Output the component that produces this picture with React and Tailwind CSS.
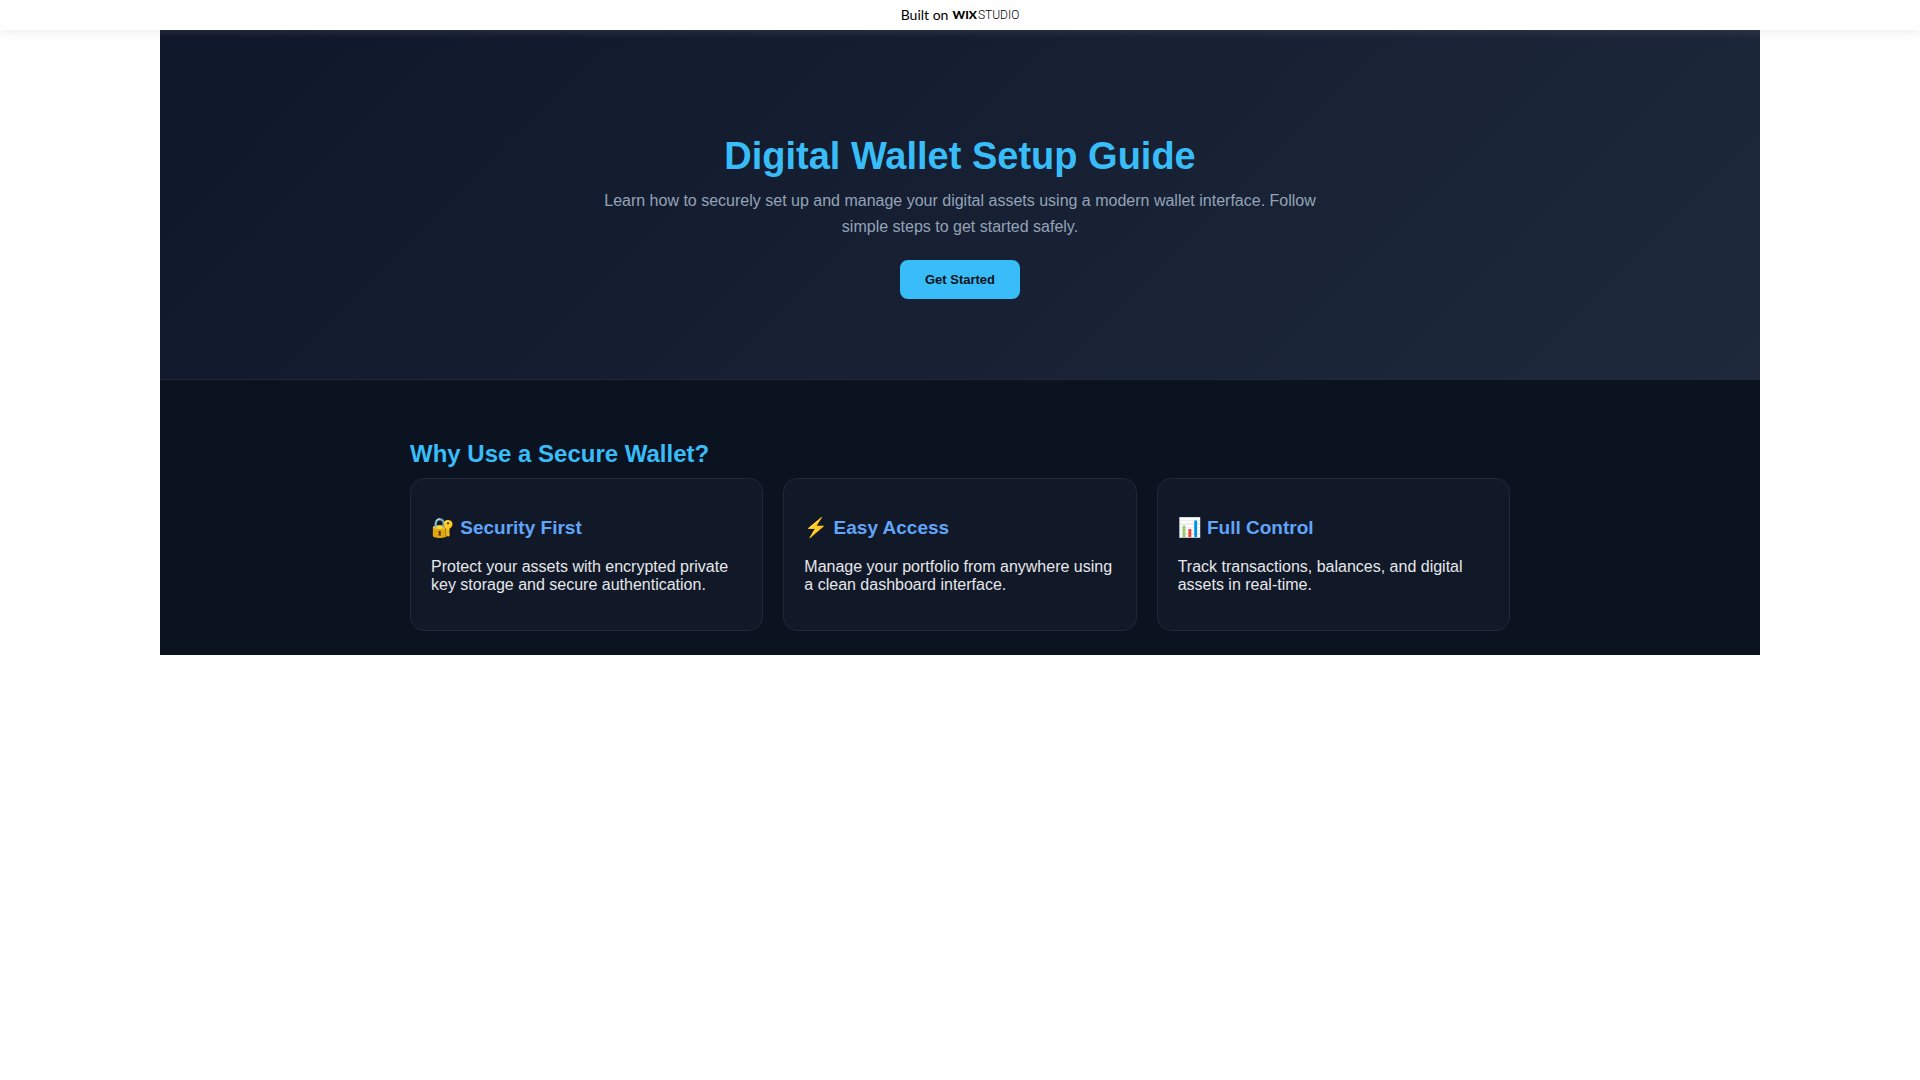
const features = [
  {
    title: "🔐 Security First",
    text: "Protect your assets with encrypted private key storage and secure authentication.",
  },
  {
    title: "⚡ Easy Access",
    text: "Manage your portfolio from anywhere using a clean dashboard interface.",
  },
  {
    title: "📊 Full Control",
    text: "Track transactions, balances, and digital assets in real-time.",
  },
];

function Banner() {
  return (
    <header className="relative z-10 bg-white shadow-[0_0_12px_rgba(155,155,155,0.25)]">
      <a
        href="#"
        className="flex h-[30px] items-center justify-center gap-1 text-sm text-black font-['Lato',sans-serif]"
      >
        <span>Built on</span>
        <span className="flex items-center gap-px text-xs">
          <span className="font-black">WIX</span>
          <span className="font-light font-['Roboto',sans-serif]">STUDIO</span>
        </span>
      </a>
    </header>
  );
}

function Hero() {
  return (
    <section className="flex flex-col items-center border-b border-[#1f2937] bg-linear-135 from-[#0f172a] to-[#1e293b] px-5 pt-[104px] pb-20 text-center">
      <h1 className="text-[38px] leading-[44px] font-bold text-[#38bdf8]">
        Digital Wallet Setup Guide
      </h1>
      <p className="mt-[10px] max-w-[720px] leading-[26px] text-[#94a3b8]">
        Learn how to securely set up and manage your digital assets using a
        modern wallet interface. Follow simple steps to get started safely.
      </p>
      <button
        type="button"
        className="mt-5 h-[39px] w-30 cursor-pointer rounded-lg bg-[#38bdf8] text-[13px] font-bold text-[#0b1220]"
      >
        Get Started
      </button>
    </section>
  );
}

function FeatureCard({ title, text }) {
  return (
    <article className="rounded-[14px] border border-[#1f2937] bg-[#111827] px-5 pt-[38px] pb-9">
      <h3 className="text-[19px] leading-[21px] font-bold text-[#60a5fa]">
        {title}
      </h3>
      <p className="mt-5 leading-[18px] text-[#e5e7eb]">{text}</p>
    </article>
  );
}

function App() {
  return (
    <div className="min-h-screen bg-white font-['Liberation_Sans',Arial,sans-serif] text-base">
      <Banner />
      <main className="mx-auto w-5/6 bg-[#0b1220]">
        <Hero />
        <section className="mx-auto max-w-[1140px] px-5 pt-15 pb-6">
          <h2 className="text-2xl leading-[28px] font-bold text-[#38bdf8]">
            Why Use a Secure Wallet?
          </h2>
          <div className="mt-[10px] grid grid-cols-3 gap-5">
            {features.map((feature) => (
              <FeatureCard key={feature.title} {...feature} />
            ))}
          </div>
        </section>
      </main>
    </div>
  );
}

export default App;
